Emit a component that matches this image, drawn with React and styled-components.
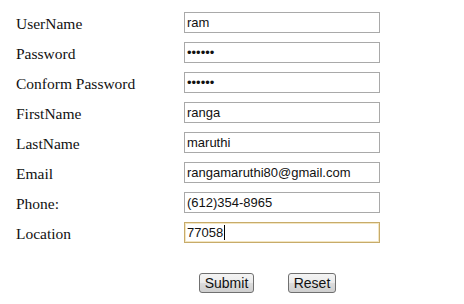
import React from "react";
import styled, { createGlobalStyle } from "styled-components";

const GlobalStyle = createGlobalStyle`
  html, body {
    margin: 0;
    padding: 0;
    background: #ffffff;
  }
`;

const fields = [
  { label: "UserName", value: "ram", type: "text" },
  { label: "Password", value: "123456", type: "password" },
  { label: "Conform Password", value: "123456", type: "password" },
  { label: "FirstName", value: "ranga", type: "text" },
  { label: "LastName", value: "maruthi", type: "text" },
  { label: "Email", value: "rangamaruthi80@gmail.com", type: "text" },
  { label: "Phone:", value: "(612)354-8965", type: "text" },
];

export default function App() {
  return (
    <>
      <GlobalStyle />
      <Page>
        <Form onSubmit={(e) => e.preventDefault()}>
          {fields.map((f) => (
            <React.Fragment key={f.label}>
              <Label>{f.label}</Label>
              <Input type={f.type} defaultValue={f.value} readOnly />
            </React.Fragment>
          ))}
          <Label>Location</Label>
          <FocusedField>
            77058
            <Caret />
          </FocusedField>
        </Form>
        <Buttons>
          <Button $w={55}>Submit</Button>
          <Button $w={48}>Reset</Button>
        </Buttons>
      </Page>
    </>
  );
}

const Page = styled.div`
  width: 464px;
  height: 304px;
  padding: 12px 0 0 16px;
  box-sizing: border-box;
`;

const Form = styled.form`
  display: grid;
  grid-template-columns: 168px 196px;
  grid-auto-rows: 21px;
  row-gap: 9px;
  align-items: center;
`;

const Label = styled.span`
  font-family: "Liberation Serif", "Times New Roman", serif;
  font-size: 15.5px;
  color: #111;
  line-height: 21px;
  padding-top: 2px;
`;

const Input = styled.input`
  box-sizing: border-box;
  width: 196px;
  height: 21px;
  margin: 0;
  padding: 0 2px;
  border: 1px solid #a9a9a9;
  border-radius: 0;
  font-family: "Liberation Sans", Arial, sans-serif;
  font-size: 13px;
  color: #111;
  background: #fff;
  outline: none;
`;

const FocusedField = styled.div`
  box-sizing: border-box;
  width: 196px;
  height: 21px;
  padding: 0 2px;
  border: 1px solid #c7ab6a;
  box-shadow: inset 0 0 0 1px #f3e6c2;
  display: flex;
  align-items: center;
  font-family: "Liberation Sans", Arial, sans-serif;
  font-size: 13px;
  color: #111;
`;

const Caret = styled.span`
  display: inline-block;
  width: 1px;
  height: 15px;
  background: #000;
  margin-left: 1px;
`;

const Buttons = styled.div`
  display: flex;
  gap: 34px;
  margin: 30px 0 0 183px;
`;

const Button = styled.button`
  box-sizing: border-box;
  width: ${(p) => p.$w}px;
  height: 20px;
  padding: 0;
  border: 1px solid #707070;
  border-radius: 3px;
  background: linear-gradient(180deg, #f4f4f4 0%, #ebebeb 50%, #dcdcdc 51%, #cfcfcf 100%);
  font-family: "Liberation Sans", Arial, sans-serif;
  font-size: 14px;
  color: #111;
  line-height: 18px;
`;
